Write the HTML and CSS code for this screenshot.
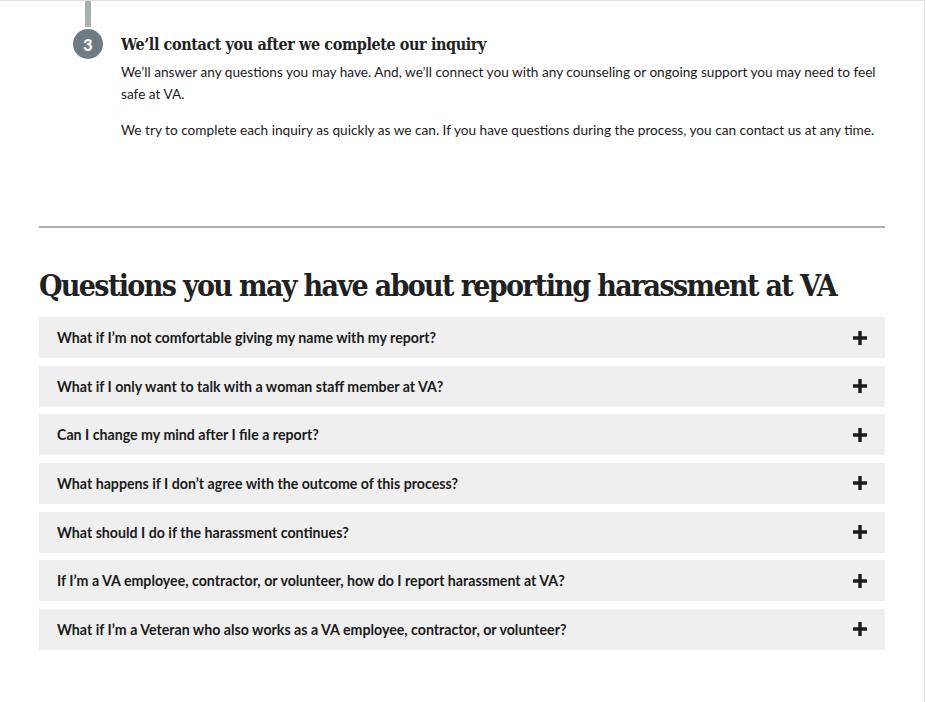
FILE: index.html
```html
<!DOCTYPE html>
<html lang="en">
<head>
    <meta charset="UTF-8">
    <meta name="viewport" content="width=device-width, initial-scale=1.0">
    <title>Reporting harassment at VA</title>
    <link rel="stylesheet" href="styles.css">
</head>
<body>
    <div class="page">
        <main class="content">
            <ol class="process-list">
                <li class="process-step">
                    <div class="step-connector"></div>
                    <div class="step-row">
                        <div class="step-marker"><span class="step-number">3</span></div>
                        <div class="step-body">
                            <h3>We’ll contact you after we complete our inquiry</h3>
                            <p>We’ll answer any questions you may have. And, we’ll connect you with any counseling or ongoing support you may need to feel safe at VA.</p>
                            <p>We try to complete each inquiry as quickly as we can. If you have questions during the process, you can contact us at any time.</p>
                        </div>
                    </div>
                </li>
            </ol>

            <hr class="divider">

            <section class="faq">
                <h2>Questions you may have about reporting harassment at VA</h2>
                <div class="accordion">
                    <button class="accordion-btn" type="button">
                        <span>What if I’m not comfortable giving my name with my report?</span>
                        <svg class="plus" viewBox="0 0 14 14"><path d="M7 0v14M0 7h14"/></svg>
                    </button>
                    <button class="accordion-btn" type="button">
                        <span>What if I only want to talk with a woman staff member at VA?</span>
                        <svg class="plus" viewBox="0 0 14 14"><path d="M7 0v14M0 7h14"/></svg>
                    </button>
                    <button class="accordion-btn" type="button">
                        <span>Can I change my mind after I file a report?</span>
                        <svg class="plus" viewBox="0 0 14 14"><path d="M7 0v14M0 7h14"/></svg>
                    </button>
                    <button class="accordion-btn" type="button">
                        <span>What happens if I don’t agree with the outcome of this process?</span>
                        <svg class="plus" viewBox="0 0 14 14"><path d="M7 0v14M0 7h14"/></svg>
                    </button>
                    <button class="accordion-btn" type="button">
                        <span>What should I do if the harassment continues?</span>
                        <svg class="plus" viewBox="0 0 14 14"><path d="M7 0v14M0 7h14"/></svg>
                    </button>
                    <button class="accordion-btn" type="button">
                        <span>If I’m a VA employee, contractor, or volunteer, how do I report harassment at VA?</span>
                        <svg class="plus" viewBox="0 0 14 14"><path d="M7 0v14M0 7h14"/></svg>
                    </button>
                    <button class="accordion-btn" type="button">
                        <span>What if I’m a Veteran who also works as a VA employee, contractor, or volunteer?</span>
                        <svg class="plus" viewBox="0 0 14 14"><path d="M7 0v14M0 7h14"/></svg>
                    </button>
                </div>
            </section>
        </main>
    </div>
</body>
</html>
```

FILE: styles.css
```css
:root {
    --text: #1b1b1b;
    --slate: #6f7b83;
    --line: #a9aeb1;
    --panel: #efefef;
    --frame: #dfe1e2;
}

* {
    margin: 0;
    padding: 0;
    box-sizing: border-box;
}

body {
    font-family: 'Lato', 'Noto Sans', sans-serif;
    color: var(--text);
    background: white;
}

.page {
    width: 925px;
    height: 702px;
    border-top: 1px solid var(--frame);
    border-right: 1px solid var(--frame);
    overflow: hidden;
}

.content {
    width: 885px;
    padding-left: 39px;
}

.process-list {
    list-style: none;
}

.step-connector {
    width: 6px;
    height: 26px;
    margin-left: 46px;
    background-color: var(--line);
}

.step-row {
    display: flex;
    margin-top: 2px;
}

.step-marker {
    width: 82px;
    flex-shrink: 0;
    padding-left: 34px;
}

.step-number {
    display: flex;
    justify-content: center;
    align-items: center;
    width: 30px;
    height: 30px;
    border-radius: 50%;
    background-color: var(--slate);
    color: white;
    font-weight: 900;
    font-size: 16px;
}

.step-body h3,
.faq h2 {
    font-family: 'DejaVu Serif Condensed', 'DejaVu Serif', serif;
    font-stretch: condensed;
    font-weight: bold;
    color: #212121;
}

.step-body h3 {
    font-size: 16px;
    line-height: 22px;
    letter-spacing: -0.4px;
    margin-top: 5px;
    margin-bottom: 5px;
}

.step-body p {
    font-size: 13.65px;
    line-height: 22px;
    margin-bottom: 14px;
}

.divider {
    border: none;
    height: 2px;
    background-color: var(--line);
    margin-top: 71px;
}

.faq h2 {
    font-size: 30px;
    line-height: 36px;
    letter-spacing: -1.65px;
    margin-top: 40px;
    margin-bottom: 13px;
}

.accordion {
    display: flex;
    flex-direction: column;
    gap: 7.67px;
}

.accordion-btn {
    display: flex;
    justify-content: space-between;
    align-items: center;
    width: 100%;
    height: 41px;
    padding: 0 18px;
    border: none;
    background-color: var(--panel);
    color: var(--text);
    font-family: 'Lato', 'Noto Sans', sans-serif;
    font-size: 14.2px;
    font-weight: bold;
    text-align: left;
    cursor: pointer;
}

.plus {
    width: 14px;
    height: 14px;
    flex-shrink: 0;
    stroke: var(--text);
    stroke-width: 3.4;
    fill: none;
}
```
